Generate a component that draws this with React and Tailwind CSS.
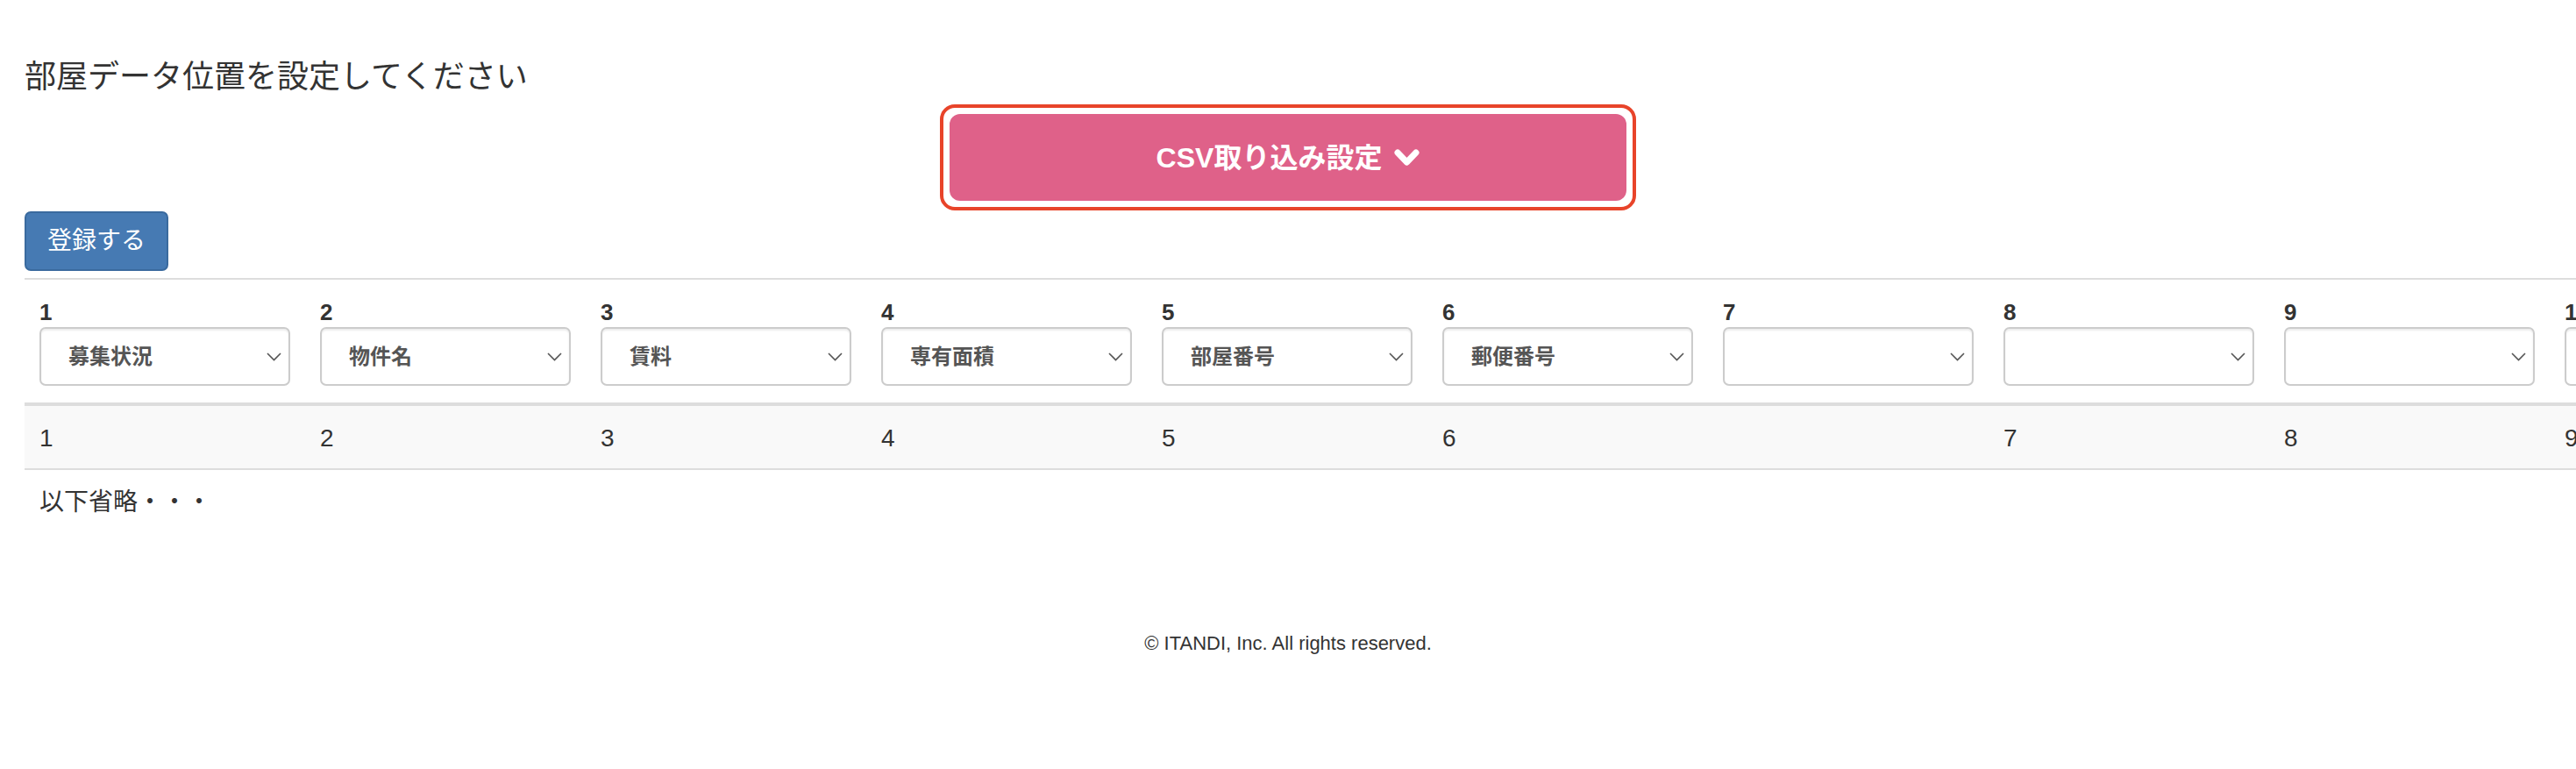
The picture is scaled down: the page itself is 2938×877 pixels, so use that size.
import React from "react";

const FONT = { fontFamily: '"Liberation Sans", "Noto Sans CJK JP", sans-serif' };

// column headers: number + selected field
const columns = [
  { no: 1, field: "募集状況" },
  { no: 2, field: "物件名" },
  { no: 3, field: "賃料" },
  { no: 4, field: "専有面積" },
  { no: 5, field: "部屋番号" },
  { no: 6, field: "郵便番号" },
  { no: 7, field: "" },
  { no: 8, field: "" },
  { no: 9, field: "" },
  { no: 10, field: "" },
  { no: 11, field: "" },
];

// sample row (7th cell is empty)
const sampleRow = ["1", "2", "3", "4", "5", "6", "", "7", "8", "9", "10"];

const SelectBox = ({ value }) => (
  <div className="relative flex h-[67px] w-[286px] items-center rounded-[7px] border-2 border-[#cccccc] bg-white pl-[31px] shadow-[inset_0_2px_2px_rgba(0,0,0,0.075)]">
    <span className="text-[24px] font-bold text-[#555555]">{value}</span>
    <svg
      className="absolute right-[8px] top-1/2 -translate-y-1/2"
      width="17"
      height="10"
      viewBox="0 0 17 10"
      fill="none"
    >
      <polyline points="1,1 8.5,8.5 16,1" stroke="#555555" strokeWidth="1.6" />
    </svg>
  </div>
);

const App = () => {
  return (
    <div className="min-h-screen w-full overflow-hidden bg-white text-[#333333]" style={FONT}>
      {/* Title */}
      <h4 className="pl-[28px] pt-[68px] text-[36px] font-normal leading-[40px]">
        部屋データ位置を設定してください
      </h4>

      {/* CSV settings toggle */}
      <div className="mt-[11px] flex justify-center">
        <div className="rounded-[17px] border-4 border-[#e8442a] p-[7px]">
          <button className="flex h-[99px] w-[772px] items-center justify-center gap-[14px] rounded-[12px] bg-[#df6189] text-[32px] font-bold text-white">
            CSV取り込み設定
            <svg width="29" height="20" viewBox="0 0 29 20" fill="none">
              <polyline
                points="4,4 14.5,15 25,4"
                stroke="white"
                strokeWidth="7"
                strokeLinecap="round"
                strokeLinejoin="round"
              />
            </svg>
          </button>
        </div>
      </div>

      {/* Register button */}
      <div className="mt-[1px] pl-[28px]">
        <button className="h-[68px] rounded-[7px] border-2 border-[#3a6a9e] bg-[#467ab3] px-[24px] text-[28px] leading-[40px] text-white">
          登録する
        </button>
      </div>

      {/* Column mapping table */}
      <div className="mt-[8px] overflow-hidden pl-[28px]">
        <table className="border-collapse">
          <thead>
            <tr className="border-t-2 border-b-4 border-[#dddddd]">
              {columns.map((col) => (
                <th key={col.no} className="w-[320px] min-w-[320px] px-[17px] pb-[19px] pt-[20px] text-left align-top">
                  <div className="text-[26px] font-bold leading-[34px] text-[#333333]">{col.no}</div>
                  <SelectBox value={col.field} />
                </th>
              ))}
            </tr>
          </thead>
          <tbody>
            <tr className="border-b-2 border-[#dddddd] bg-[#f9f9f9]">
              {sampleRow.map((v, i) => (
                <td key={i} className="px-[17px] pb-[14px] pt-[17px] text-[28px] leading-[40px]">
                  {v}
                </td>
              ))}
            </tr>
          </tbody>
        </table>
        <p className="mt-[17px] pl-[17px] text-[28px] leading-[40px]">以下省略・・・</p>
      </div>

      {/* Footer */}
      <footer className="mt-[127px] text-center text-[22px] leading-[28px]">
        © ITANDI, Inc. All rights reserved.
      </footer>
    </div>
  );
};

export default App;
